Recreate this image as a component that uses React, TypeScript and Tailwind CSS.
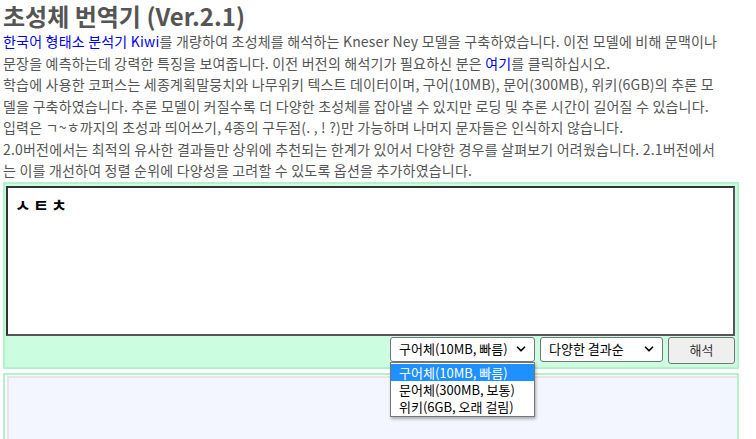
import { ChevronDown } from 'lucide-react'

const font = { fontFamily: '"Noto Sans CJK KR", "Noto Sans", sans-serif' }

const lines: React.ReactNode[] = [
  <>
    <a className="text-[#0000ee]">한국어 형태소 분석기 Kiwi</a>를 개량하여 초성체를 해석하는 Kneser Ney 모델을 구축하였습니다. 이전 모델에 비해 문맥이나
  </>,
  <>
    문장을 예측하는데 강력한 특징을 보여줍니다. 이전 버전의 해석기가 필요하신 분은 <a className="text-[#0000ee]">여기</a>를 클릭하십시오.
  </>,
  '학습에 사용한 코퍼스는 세종계획말뭉치와 나무위키 텍스트 데이터이며, 구어(10MB), 문어(300MB), 위키(6GB)의 추론 모',
  '델을 구축하였습니다. 추론 모델이 커질수록 더 다양한 초성체를 잡아낼 수 있지만 로딩 및 추론 시간이 길어질 수 있습니다.',
  '입력은 ㄱ~ㅎ까지의 초성과 띄어쓰기, 4종의 구두점(. , ! ?)만 가능하며 나머지 문자들은 인식하지 않습니다.',
  '2.0버전에서는 최적의 유사한 결과들만 상위에 추천되는 한계가 있어서 다양한 경우를 살펴보기 어려웠습니다. 2.1버전에서',
  '는 이를 개선하여 정렬 순위에 다양성을 고려할 수 있도록 옵션을 추가하였습니다.',
]

const models = ['구어체(10MB, 빠름)', '문어체(300MB, 보통)', '위키(6GB, 오래 걸림)']

export default function App() {
  return (
    <div className="w-[756px] h-[439px] overflow-hidden bg-white px-[3px] pt-[1px] text-[#444]" style={font}>
      <h1 className="text-[24px] font-bold leading-[30px] text-[#555]">초성체 번역기 (Ver.2.1)</h1>

      <div className="text-[14px] tracking-[0.2px] text-[#555] whitespace-nowrap">
        {lines.map((l, i) => (
          <div key={i} className="h-[21.5px] leading-[21.5px]">{l}</div>
        ))}
      </div>

      {/* input panel */}
      <div className="w-[736px] border-2 border-[#b3f3cc] bg-[#ccfde0] px-[1px] pt-[2px] pb-[3px]">
        <div className="h-[150px] w-[729px] border-2 border-t-[#333] border-l-[#333] border-b-[#555] border-r-[#555] bg-white pl-[7px] pt-[5px]">
          <span className="text-[17px] font-bold leading-[24px] tracking-[2.5px] text-black">ㅅㅌㅊ</span>
        </div>

        <div className="relative flex justify-end gap-[5px] pr-[1px] pt-[1px]">
          <div className="relative">
            <div className="flex h-[25px] w-[145px] items-center justify-between rounded-[3px] border border-[#767676] bg-white pl-[8px] pr-[6px] text-[13px] leading-[16px] text-black">
              <span>구어체(10MB, 빠름)</span>
              <ChevronDown size={14} strokeWidth={3} />
            </div>
            {/* open option list */}
            <div className="absolute left-0 top-[25px] z-10 w-[145px] border border-[#767676] bg-white py-[1px] text-[13px] text-black shadow-[1px_2px_3px_rgba(0,0,0,0.3)]">
              {models.map((m, i) => (
                <div
                  key={m}
                  className={i === 0 ? 'h-[17px] bg-[#1e90ff] px-[8px] leading-[17px] text-white' : 'h-[17px] px-[8px] leading-[17px]'}
                >
                  {m}
                </div>
              ))}
            </div>
          </div>

          <div className="flex h-[25px] w-[123px] items-center justify-between rounded-[3px] border border-[#767676] bg-white pl-[8px] pr-[6px] text-[13px] leading-[16px] text-black">
            <span>다양한 결과순</span>
            <ChevronDown size={14} strokeWidth={3} />
          </div>

          <button className="h-[27px] w-[67px] rounded-[3px] border border-[#767676] bg-[#efefef] text-[13px] leading-[16px] text-[#333]">해석</button>
        </div>
      </div>

      {/* result panel */}
      <div className="mt-[4px] h-[80px] w-[736px] border-2 border-[#b3f3cc] pl-[2px] pt-[1px]">
        <div className="h-full border-t-2 border-l-2 border-[#e6e6e6] bg-[#f3f6fe]" />
      </div>
    </div>
  )
}
